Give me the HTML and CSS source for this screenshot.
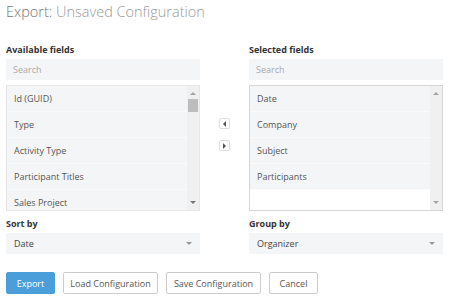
FILE: index.html
```html
<!DOCTYPE html>
<html lang="en">
<head>
    <meta charset="UTF-8">
    <title>Export</title>
    <link rel="stylesheet" href="styles.css">
</head>
<body>

    <h1 class="title"><span class="title-lead">Export:</span> Unsaved Configuration</h1>

    <div class="fields">
        <div class="field-col">
            <div class="label">Available fields</div>
            <div class="search">Search</div>
            <div class="list">
                <div class="list-items">
                    <div class="item">Id (GUID)</div>
                    <div class="item">Type</div>
                    <div class="item">Activity Type</div>
                    <div class="item">Participant Titles</div>
                    <div class="item">Sales Project</div>
                </div>
                <div class="scrollbar">
                    <span class="arrow-up"></span>
                    <span class="thumb"></span>
                    <span class="spacer"></span>
                    <span class="arrow-down"></span>
                </div>
            </div>
        </div>

        <div class="move-col">
            <button class="move-btn"><span class="tri-left"></span></button>
            <button class="move-btn"><span class="tri-right"></span></button>
        </div>

        <div class="field-col">
            <div class="label">Selected fields</div>
            <div class="search">Search</div>
            <div class="list list-selected">
                <div class="list-items">
                    <div class="item">Date</div>
                    <div class="item">Company</div>
                    <div class="item">Subject</div>
                    <div class="item">Participants</div>
                </div>
                <div class="scrollbar">
                    <span class="arrow-up"></span>
                    <span class="spacer"></span>
                    <span class="arrow-down"></span>
                </div>
            </div>
        </div>
    </div>

    <div class="options">
        <div class="option">
            <div class="label">Sort by</div>
            <div class="select">Date<span class="caret"></span></div>
        </div>
        <div class="option">
            <div class="label">Group by</div>
            <div class="select">Organizer<span class="caret"></span></div>
        </div>
    </div>

    <div class="actions">
        <button class="btn btn-primary">Export</button>
        <button class="btn btn-wide">Load Configuration</button>
        <button class="btn btn-wide">Save Configuration</button>
        <button class="btn">Cancel</button>
    </div>

</body>
</html>
```

FILE: styles.css
```css
* {
    margin: 0;
    padding: 0;
    box-sizing: border-box;
}

body {
    background-color: #FFFFFF;
    color: #555;
    font-family: 'Open Sans', 'Liberation Sans', sans-serif;
    font-size: 9px;
    padding: 4px 9px 0 6px;
}

.title {
    font-size: 14.5px;
    font-weight: 300;
    color: #9a9a9a;
    line-height: 16px;
    margin-bottom: 24px;
}

.title-lead {
    color: #777;
}

.label {
    font-weight: 700;
    color: #333;
    line-height: 12px;
    margin-bottom: 3px;
}

.fields {
    display: grid;
    grid-template-columns: 194px 49px 194px;
}

.search {
    background-color: #f4f5f7;
    color: #aaa;
    height: 21px;
    line-height: 21px;
    padding-left: 7px;
    margin-bottom: 5px;
}

.list {
    display: flex;
    height: 126px;
    border: 1px solid #e6e6e6;
    overflow: hidden;
}

.list-selected {
    border-color: #d6d6d6;
}

.list-items {
    flex: 1;
    background-color: #f4f5f7;
}

.list-selected .list-items {
    background-color: #fff;
}

.item {
    height: 26px;
    line-height: 25px;
    padding-left: 7px;
    border-bottom: 1px solid #fafafa;
    background-color: #f4f5f7;
}

.scrollbar {
    width: 12px;
    background-color: #f0f0f0;
    display: flex;
    flex-direction: column;
    align-items: center;
}

.arrow-up {
    margin-top: 6px;
    border-left: 3px solid transparent;
    border-right: 3px solid transparent;
    border-bottom: 3px solid #a3a3a3;
}

.arrow-down {
    margin-bottom: 6px;
    border-left: 3px solid transparent;
    border-right: 3px solid transparent;
    border-top: 3px solid #777;
}

.list-selected .arrow-down {
    border-top-color: #a3a3a3;
}

.thumb {
    width: 10px;
    height: 13px;
    margin-top: 4px;
    background-color: #bdbdbd;
}

.spacer {
    flex: 1;
}

.move-col {
    display: flex;
    flex-direction: column;
    align-items: center;
    gap: 11px;
    padding-top: 74px;
}

.move-btn {
    width: 11px;
    height: 11px;
    background-color: #fff;
    border: 1px solid #ddd;
    border-radius: 2px;
    display: flex;
    align-items: center;
    justify-content: center;
}

.tri-left {
    border-top: 3px solid transparent;
    border-bottom: 3px solid transparent;
    border-right: 3px solid #555;
}

.tri-right {
    border-top: 3px solid transparent;
    border-bottom: 3px solid transparent;
    border-left: 3px solid #555;
}

.options {
    display: grid;
    grid-template-columns: 194px 194px;
    column-gap: 49px;
    margin-top: 7px;
}

.select {
    position: relative;
    background-color: #f4f5f7;
    color: #444;
    height: 21px;
    line-height: 21px;
    padding-left: 8px;
}

.caret {
    position: absolute;
    right: 8px;
    top: 9px;
    border-left: 3px solid transparent;
    border-right: 3px solid transparent;
    border-top: 3px solid #999;
}

.actions {
    display: flex;
    gap: 8px;
    margin-top: 18px;
}

.btn {
    font-family: inherit;
    font-size: 9px;
    height: 22px;
    width: 49px;
    padding: 0;
    white-space: nowrap;
    background-color: #fff;
    color: #555;
    border: 1px solid #ccc;
    border-radius: 2px;
}

.btn-primary {
    background-color: #4a9fdb;
    border-color: #4a9fdb;
    color: #fff;
}

.btn-wide {
    width: 95px;
}
```
